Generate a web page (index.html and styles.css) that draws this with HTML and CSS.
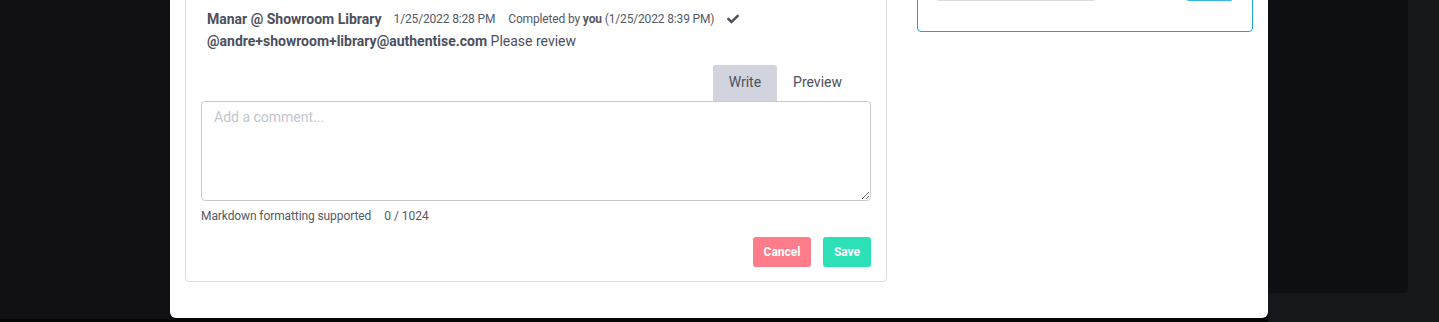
FILE: index.html
```html
<!DOCTYPE html>
<html lang="en-US">
    <head>
        <meta charset="utf-8">
        <link rel="stylesheet" href="styles.css">
    </head>
    <body>
        <div class="scene">
            <div class="under">
                <div class="shade"></div>
                <div class="modal">
                    <div class="card comments">
                        <div class="comment">
                            <div class="comment_head">
                                <b class="author">Manar @ Showroom Library</b>
                                <span class="stamp">1/25/2022 8:28 PM</span>
                                <span class="stamp">Completed by <b>you</b> (1/25/2022 8:39 PM)</span>
                                <svg class="check" viewBox="0 0 512 512" width="12" height="12"><path d="M173.9 439.4l-166.4-166.4c-10-10-10-26.2 0-36.2l36.2-36.2c10-10 26.2-10 36.2 0L192 312.7 432.1 72.6c10-10 26.2-10 36.2 0l36.2 36.2c10 10 10 26.2 0 36.2l-294.4 294.4c-10 10-26.2 10-36.2 0z"/></svg>
                            </div>
                            <div class="comment_body"><b>@andre+showroom+library@authentise.com</b> Please review</div>
                        </div>
                        <div class="tabs">
                            <div class="tab active">Write</div>
                            <div class="tab">Preview</div>
                        </div>
                        <textarea class="editor" placeholder="Add a comment..."></textarea>
                        <div class="editor_meta">
                            <span>Markdown formatting supported</span>
                            <span>0 / 1024</span>
                        </div>
                        <div class="actions">
                            <button class="btn cancel">Cancel</button>
                            <button class="btn save">Save</button>
                        </div>
                    </div>
                    <div class="card side">
                        <div class="side_row">
                            <div class="side_input"></div>
                            <div class="side_btn"></div>
                        </div>
                    </div>
                </div>
            </div>
            <div class="shade_right"></div>
        </div>
    </body>
</html>
```

FILE: styles.css
```css
body{
    margin: 0;
    background-color: #16171b;
    font-family: Roboto, "Liberation Sans", sans-serif;
    color: #4c505d;
    overflow: hidden;
}
div.scene{
    display: flex;
    align-items: flex-start;
    height: 322px;
}
div.under{
    display: flex;
    align-items: flex-start;
    width: 1268px;
    height: 322px;
    background-color: #050506;
}
div.shade{
    width: 170px;
    height: 319px;
    background-color: #111113;
}
div.shade_right{
    width: 140px;
    height: 293px;
    background-color: #0e0f12;
    border-bottom-right-radius: 6px;
}
div.modal{
    width: 1098px;
    height: 318px;
    box-sizing: border-box;
    background-color: #fff;
    border-radius: 0 0 6px 6px;
    padding: 0 15px;
    display: flex;
    align-items: flex-start;
    gap: 30px;
}
div.card{
    box-sizing: border-box;
    border-radius: 4px;
}
div.comments{
    width: 702px;
    margin-top: -10px;
    border: 1px solid #dcdcdc;
    padding: 16px 15px 14px 15px;
}
div.comment{
    margin-left: 6px;
}
div.comment_head{
    display: flex;
    align-items: center;
    height: 23px;
    font-size: 12px;
}
div.comment_head b.author{
    font-size: 14px;
    margin-right: 12px;
}
div.comment_head span.stamp{
    margin-right: 13px;
    letter-spacing: -0.15px;
    color: #555966;
}
svg.check{
    fill: #4c505d;
}
div.comment_body{
    line-height: 23px;
    font-size: 14px;
}
div.tabs{
    display: flex;
    justify-content: flex-end;
    margin: 12px 13px 0 0;
}
div.tab{
    height: 36px;
    line-height: 35px;
    padding: 0 16px;
    font-size: 14px;
    border-radius: 3px 3px 0 0;
}
div.tab.active{
    background-color: #d1d4dd;
}
textarea.editor{
    display: block;
    width: 100%;
    height: 100px;
    box-sizing: border-box;
    border: 1px solid #c8c8c8;
    border-radius: 4px;
    padding: 7px 12px;
    font-family: Roboto, "Liberation Sans", sans-serif;
    font-size: 14px;
    color: #4c505d;
    resize: vertical;
    outline: none;
}
textarea.editor::placeholder{
    color: #c3c6ce;
}
div.editor_meta{
    display: flex;
    gap: 13px;
    margin-top: 6px;
    line-height: 18px;
    font-size: 12px;
    color: #555966;
}
div.editor_meta span:first-child{
    letter-spacing: -0.1px;
}
div.actions{
    display: flex;
    justify-content: flex-end;
    gap: 12px;
    margin-top: 12px;
}
button.btn{
    height: 30px;
    border: none;
    border-radius: 3px;
    color: #fff;
    font-family: Roboto, "Liberation Sans", sans-serif;
    font-size: 12px;
    font-weight: bold;
    padding: 0;
}
button.cancel{
    width: 58px;
    background-color: #ff7c8b;
}
button.save{
    width: 48px;
    background-color: #2ee0b5;
}
div.side{
    width: 336px;
    margin-top: -40px;
    border: 1px solid #1aa3dc;
    padding: 6px 19px 30px 17px;
}
div.side_row{
    display: flex;
    justify-content: space-between;
}
div.side_input{
    width: 162px;
    height: 34px;
    box-sizing: border-box;
    border: 1px solid #dcdcdc;
    border-radius: 4px;
}
div.side_btn{
    width: 47px;
    height: 34px;
    border-radius: 3px;
    background-color: #36b6e6;
}
```
